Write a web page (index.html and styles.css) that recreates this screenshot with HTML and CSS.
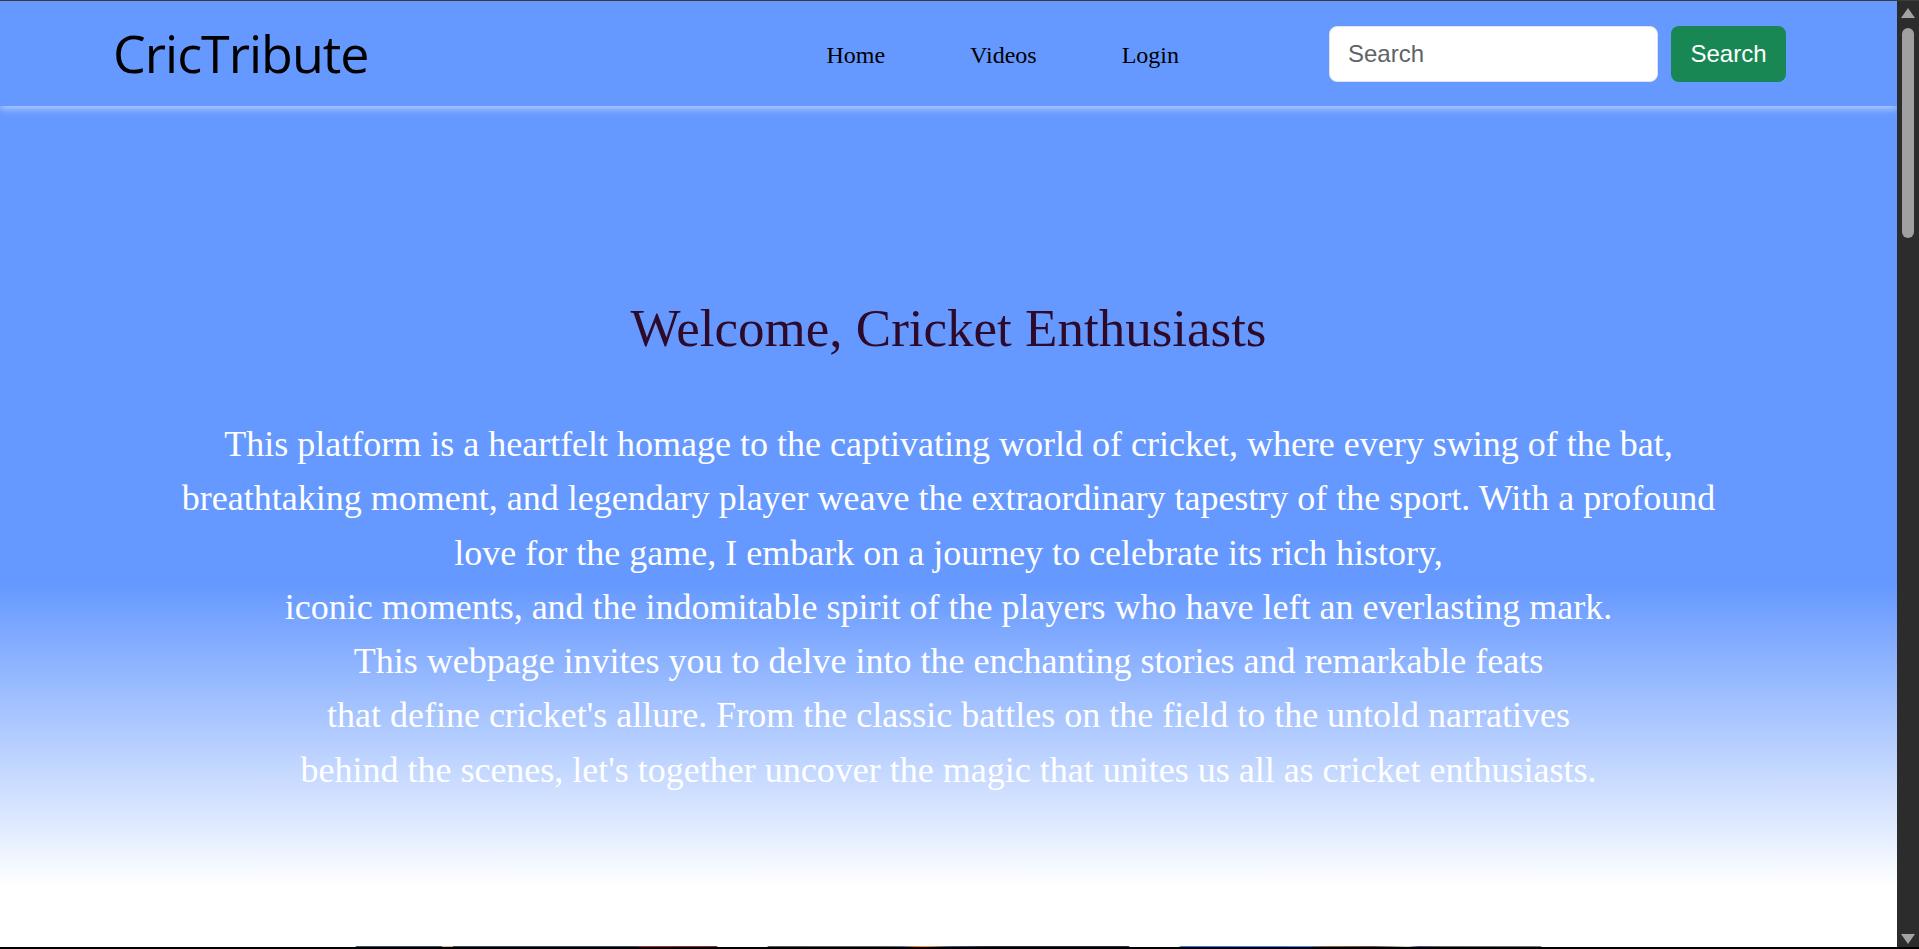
FILE: index.html
```html
<!DOCTYPE html>
<html lang="en">
<head>
<meta charset="utf-8">
<title>CricTribute</title>
<link rel="stylesheet" href="styles.css">
</head>
<body>
<div class="window">
  <div class="page">
    <header class="topbar">
      <div class="logo">CricTribute</div>
      <nav class="nav">
        <a href="#" class="nav-link">Home</a>
        <a href="#" class="nav-link">Videos</a>
        <a href="#" class="nav-link">Login</a>
      </nav>
      <form class="search">
        <input class="search-input" type="search" placeholder="Search">
        <button class="search-btn" type="button">Search</button>
      </form>
    </header>
    <section class="hero">
      <h1 class="hero-title">Welcome, Cricket Enthusiasts</h1>
      <p class="hero-text">This platform is a heartfelt homage to the captivating world of cricket, where every swing of the bat,<br>breathtaking moment, and legendary player weave the extraordinary tapestry of the sport. With a profound<br>love for the game, I embark on a journey to celebrate its rich history,<br>iconic moments, and the indomitable spirit of the players who have left an everlasting mark.<br>This webpage invites you to delve into the enchanting stories and remarkable feats<br>that define cricket's allure. From the classic battles on the field to the untold narratives<br>behind the scenes, let's together uncover the magic that unites us all as cricket enthusiasts.</p>
    </section>
    <section class="cards">
      <div class="card card-1"></div>
      <div class="card card-2"></div>
      <div class="card card-3"></div>
    </section>
  </div>
  <div class="scrollbar">
    <div class="arrow arrow-up"></div>
    <div class="thumb"></div>
    <div class="track"></div>
    <div class="arrow arrow-down"></div>
  </div>
</div>
</body>
</html>
```
FILE: styles.css
```css
html, body {
  margin: 0;
  padding: 0;
  background: #ffffff;
}

.window {
  display: flex;
  height: 949px;
  box-sizing: border-box;
  border-top: 1px solid #3c3c3c;
  border-bottom: 2px solid #000000;
  overflow: hidden;
}

.page {
  flex: 1;
  min-width: 0;
  overflow: hidden;
  display: flex;
  flex-direction: column;
}

.topbar {
  flex: 0 0 105px;
  height: 105px;
  box-sizing: border-box;
  display: flex;
  align-items: center;
  padding: 0 111px 0 113px;
  background: #6699ff;
  position: relative;
  z-index: 1;
  box-shadow: 0 3px 7px rgba(255, 255, 255, 0.5);
}

.logo {
  font-family: "Open Sans", "Noto Sans", sans-serif;
  font-size: 52px;
  letter-spacing: -1px;
  color: #000000;
  line-height: 71px;
  margin-bottom: 2px;
}

.nav {
  margin-left: auto;
  margin-right: 150px;
  display: flex;
  gap: 85px;
  padding-top: 3px;
}

.nav-link {
  font-family: "Liberation Serif", "Times New Roman", serif;
  font-size: 24px;
  color: #000000;
  text-decoration: none;
}

.search {
  display: flex;
  gap: 13px;
  margin: 0;
}

.search-input {
  width: 329px;
  height: 56px;
  box-sizing: border-box;
  border: 1px solid #dee2e6;
  border-radius: 8px;
  background: #ffffff;
  padding: 0 18px;
  font-family: "Liberation Sans", Arial, sans-serif;
  font-size: 24px;
  color: #212529;
  outline: none;
}

.search-input::placeholder {
  color: #5f6368;
}

.search-btn {
  width: 115px;
  height: 56px;
  box-sizing: border-box;
  border: none;
  border-radius: 8px;
  background: #198754;
  color: #ffffff;
  font-family: "Liberation Sans", Arial, sans-serif;
  font-size: 24px;
  padding: 0;
}

.hero {
  flex: 0 0 840px;
  height: 840px;
  box-sizing: border-box;
  padding-top: 192px;
  text-align: center;
  background: linear-gradient(to bottom, #6699ff 0%, #6699ff 57%, #ffffff 93%, #ffffff 100%);
}

.hero-title {
  margin: 0;
  font-family: "Liberation Serif", Georgia, serif;
  font-weight: normal;
  font-size: 53px;
  line-height: 60px;
  color: #2e0a2a;
}

.hero-text {
  margin: 59px 0 0;
  font-family: "Liberation Serif", "Times New Roman", serif;
  font-size: 36px;
  line-height: 54.3px;
  color: #ffffff;
}

.cards {
  flex: 0 0 220px;
  display: flex;
  justify-content: center;
  gap: 49px;
}

.card {
  width: 363px;
  height: 220px;
  border-radius: 2px;
}

.card-1 {
  background: linear-gradient(to right, #3d4e78 0%, #3d4e78 24%, #d9b98a 24%, #d9b98a 27%, #3b4d76 27%, #3b4d76 78%, #a8343d 78%, #8a2f3a 100%);
}

.card-2 {
  background: linear-gradient(to right, #5e5a5a 0%, #6b6565 35%, #3f66c9 37%, #f0902a 41%, #f0902a 45%, #4a5aa0 50%, #2b2e55 60%, #2a2c4a 100%);
}

.card-3 {
  background: linear-gradient(to right, #3e7ae6 0%, #4a86ef 36%, #a0603a 40%, #7a4b32 54%, #8a8a8a 58%, #e6d6b8 63%, #3c4fa8 66%, #6a6a6a 72%, #7a7a7a 100%);
}

.scrollbar {
  flex: 0 0 22px;
  width: 22px;
  background: #2c2c2c;
  display: flex;
  flex-direction: column;
  align-items: center;
}

.arrow {
  width: 0;
  height: 0;
  border-left: 7px solid transparent;
  border-right: 7px solid transparent;
}

.arrow-up {
  margin-top: 7px;
  border-bottom: 10px solid #a3a3a3;
}

.arrow-down {
  margin-bottom: 3px;
  border-top: 10px solid #a3a3a3;
}

.thumb {
  margin-top: 10px;
  width: 12px;
  height: 210px;
  border-radius: 6px;
  background: #a0a0a0;
}

.track {
  flex: 1;
}
```
